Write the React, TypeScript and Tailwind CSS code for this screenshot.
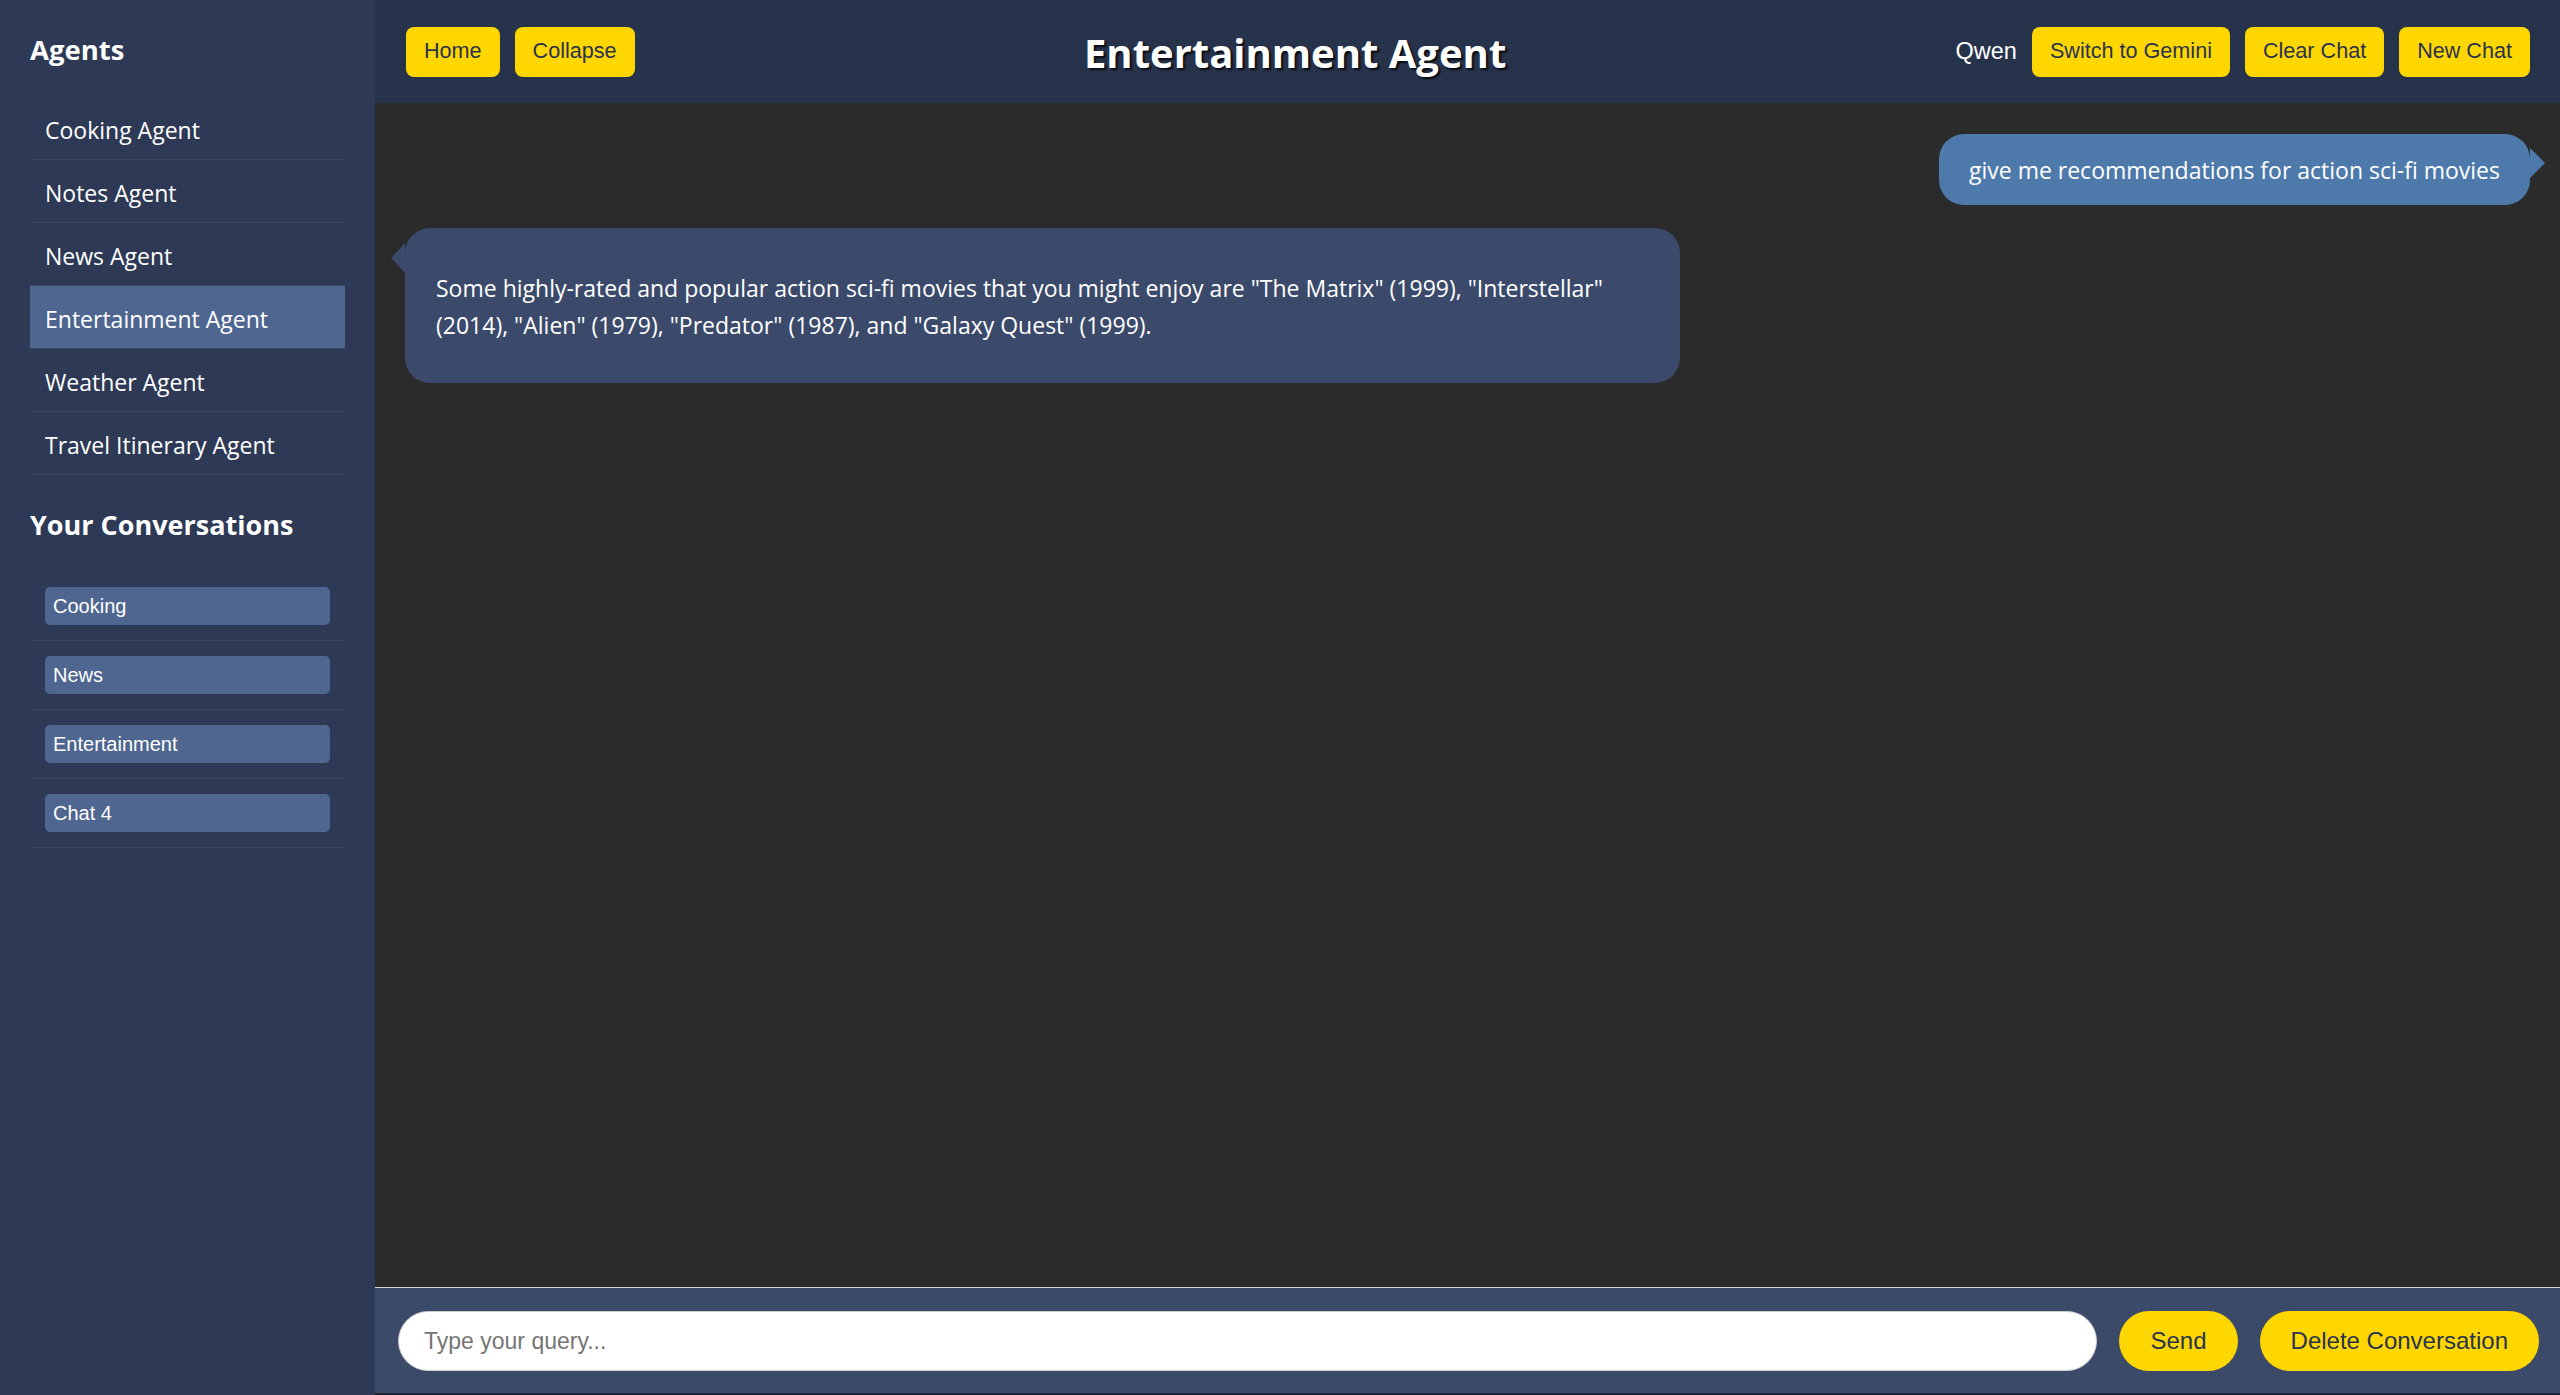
import React from "react";

const agents = [
  "Cooking Agent",
  "Notes Agent",
  "News Agent",
  "Entertainment Agent",
  "Weather Agent",
  "Travel Itinerary Agent",
];

const conversations = ["Cooking", "News", "Entertainment", "Chat 4"];

const segoe = "font-['Open_Sans',sans-serif]";
const arial = "font-['Liberation_Sans',Arial,sans-serif]";

function YellowButton({ children }: { children: React.ReactNode }) {
  return (
    <button
      className={`h-[50px] rounded-[8px] bg-[#ffd700] px-[18px] text-[21.6px] text-[#2a3350] ${arial}`}
    >
      {children}
    </button>
  );
}

export default function App() {
  return (
    <div className={`flex h-screen w-full overflow-hidden ${segoe}`}>
      <aside className="w-[375px] shrink-0 bg-[#2e3a55] px-[30px] pt-[32px] text-white">
        <h2 className="mb-[29px] text-[27.5px] font-bold leading-[36px]">Agents</h2>
        <ul>
          {agents.map((name) => (
            <li
              key={name}
              className={`flex h-[63px] items-center border-b border-[#3a4764] pl-[15px] pt-[4px] text-[23px] ${
                name === "Entertainment Agent" ? "bg-[#4e6690]" : ""
              }`}
            >
              {name}
            </li>
          ))}
        </ul>

        <h2 className="mb-[29px] mt-[32px] text-[27px] font-bold leading-[36px]">
          Your Conversations
        </h2>
        <ul>
          {conversations.map((c) => (
            <li key={c} className="border-b border-[#3a4764] p-[15px]">
              <button
                className={`flex h-[38px] w-full items-center rounded-[5px] bg-[#4e6690] pl-[8px] text-left text-[20px] text-white ${arial}`}
              >
                {c}
              </button>
            </li>
          ))}
        </ul>
      </aside>

      <main className="flex min-w-0 flex-1 flex-col">
        <header className="flex h-[103px] shrink-0 items-center justify-between bg-[#27324b] pl-[31px] pr-[30px]">
          <div className="flex gap-[15px]">
            <YellowButton>Home</YellowButton>
            <YellowButton>Collapse</YellowButton>
          </div>
          <h1 className="pt-[2px] text-[40px] font-bold text-white [text-shadow:2px_2px_2px_rgba(0,0,0,0.8)]">
            Entertainment Agent
          </h1>
          <div className="flex items-center gap-[15px]">
            <span className={`text-[23.5px] text-white ${arial}`}>Qwen</span>
            <YellowButton>Switch to Gemini</YellowButton>
            <YellowButton>Clear Chat</YellowButton>
            <YellowButton>New Chat</YellowButton>
          </div>
        </header>

        <section className="flex flex-1 flex-col gap-[23px] bg-[#2b2b2b] px-[30px] pt-[31px]">
          <div className="relative max-w-[60%] self-end rounded-[25px] bg-[#4e7aab] px-[30px] pb-[16px] pt-[18px] text-[23px] leading-[37px] text-white">
            give me recommendations for action sci-fi movies
            <span className="absolute -right-[15px] top-[14px] h-0 w-0 border-y-[15px] border-l-[15px] border-y-transparent border-l-[#4e7aab]" />
          </div>
          <div className="relative max-w-[60%] self-start rounded-[25px] bg-[#3b4a6b] px-[31px] pb-[39px] pt-[42px] text-[23px] leading-[37px] text-white">
            Some highly-rated and popular action sci-fi movies that you might enjoy are "The
            Matrix" (1999), "Interstellar" (2014), "Alien" (1979), "Predator" (1987), and
            "Galaxy Quest" (1999).
            <span className="absolute -left-[14px] top-[15px] h-0 w-0 border-y-[15px] border-r-[14px] border-y-transparent border-r-[#3b4a6b]" />
          </div>
        </section>

        <footer
          className={`flex shrink-0 items-center gap-[22px] border-b-2 border-t border-b-[#1f2433] border-t-[#d4d4d4] bg-[#3b4a69] pb-[22px] pl-[23px] pr-[21px] pt-[23px] ${arial}`}
        >
          <input
            type="text"
            placeholder="Type your query..."
            className="h-[60px] flex-1 rounded-full border border-[#cccccc] bg-white pl-[25px] text-[23px] text-[#333] outline-none placeholder:text-[#757575]"
          />
          <button className="h-[60px] rounded-full bg-[#ffd700] px-[31px] text-[24px] text-[#2a3350]">
            Send
          </button>
          <button className="h-[60px] rounded-full bg-[#ffd700] px-[31px] text-[24px] text-[#2a3350]">
            Delete Conversation
          </button>
        </footer>
      </main>
    </div>
  );
}
